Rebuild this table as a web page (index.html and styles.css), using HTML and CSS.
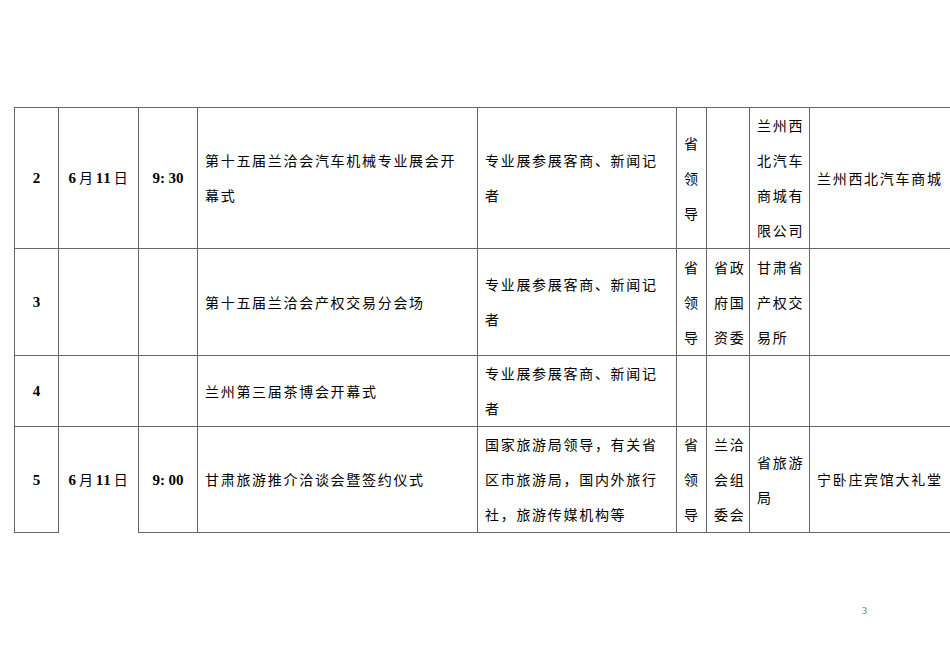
FILE: index.html
```html
<!DOCTYPE html>
<html lang="zh-CN">
<head>
<meta charset="utf-8">
<title>活动安排</title>
<link rel="stylesheet" href="styles.css">
</head>
<body>
<div class="page">
  <table class="sched">
    <colgroup>
      <col class="c1"><col class="c2"><col class="c3"><col class="c4"><col class="c5"><col class="c6"><col class="c7"><col class="c8"><col class="c9">
    </colgroup>
    <tr class="r2">
      <td class="ctr"><span class="num">2</span></td>
      <td class="ctr"><span class="num dt">6</span>月<span class="num dt">11</span>日</td>
      <td class="ctr"><span class="num">9: 30</span></td>
      <td>第十五届兰洽会汽车机械专业展会开<br>幕式</td>
      <td>专业展参展客商、新闻记<br>者</td>
      <td>省<br>领<br>导</td>
      <td></td>
      <td>兰州西<br>北汽车<br>商城有<br>限公司</td>
      <td>兰州西北汽车商城</td>
    </tr>
    <tr class="r3">
      <td class="ctr"><span class="num">3</span></td>
      <td></td>
      <td></td>
      <td>第十五届兰洽会产权交易分会场</td>
      <td>专业展参展客商、新闻记<br>者</td>
      <td>省<br>领<br>导</td>
      <td>省政<br>府国<br>资委</td>
      <td>甘肃省<br>产权交<br>易所</td>
      <td></td>
    </tr>
    <tr class="r4">
      <td class="ctr"><span class="num">4</span></td>
      <td></td>
      <td></td>
      <td>兰州第三届茶博会开幕式</td>
      <td>专业展参展客商、新闻记<br>者</td>
      <td></td>
      <td></td>
      <td></td>
      <td></td>
    </tr>
    <tr class="r5">
      <td class="ctr"><span class="num">5</span></td>
      <td class="ctr open"><span class="num dt">6</span>月<span class="num dt">11</span>日</td>
      <td class="ctr"><span class="num">9: 00</span></td>
      <td>甘肃旅游推介洽谈会暨签约仪式</td>
      <td>国家旅游局领导，有关省<br>区市旅游局，国内外旅行<br>社，旅游传媒机构等</td>
      <td>省<br>领<br>导</td>
      <td>兰洽<br>会组<br>委会</td>
      <td>省旅游<br>局</td>
      <td>宁卧庄宾馆大礼堂</td>
    </tr>
  </table>
  <div class="pageno">3</div>
</div>
</body>
</html>
```
FILE: styles.css
```css
html, body {
  margin: 0;
  padding: 0;
  background: #fff;
  overflow: hidden;
}
.page {
  width: 950px;
  height: 672px;
  overflow: hidden;
  padding-top: 107px;
  box-sizing: border-box;
}
.sched {
  margin-left: 14px;
  border-collapse: collapse;
  table-layout: fixed;
  width: 1088px;
  font-family: "Noto Sans CJK SC", sans-serif;
  font-size: 14px;
  letter-spacing: 1.7px;
  line-height: 35px;
  color: #000;
}
.c1 { width: 44px; }
.c2 { width: 80px; }
.c3 { width: 59px; }
.c4 { width: 280px; }
.c5 { width: 199px; }
.c6 { width: 30px; }
.c7 { width: 43px; }
.c8 { width: 60px; }
.c9 { width: 293px; }
.sched td {
  border: 1px solid #666;
  padding: 0 0 0 7px;
  vertical-align: middle;
  white-space: nowrap;
  overflow: hidden;
}
.sched td.ctr {
  text-align: center;
  padding: 0;
}
.sched td.open {
  border-bottom: none;
}
.r2 { height: 141px; }
.r3 { height: 107px; }
.r4 { height: 71px; }
.r5 { height: 106px; }
.num {
  font-family: "Liberation Serif", serif;
  font-weight: bold;
  font-size: 15px;
  letter-spacing: 0;
}
.num.dt {
  margin: 0 2px 0 1px;
  letter-spacing: 1px;
}
.pageno {
  margin-top: 72px;
  padding-left: 862px;
  font-family: "Liberation Serif", serif;
  font-size: 10px;
  color: #666;
  line-height: 12px;
}
```
